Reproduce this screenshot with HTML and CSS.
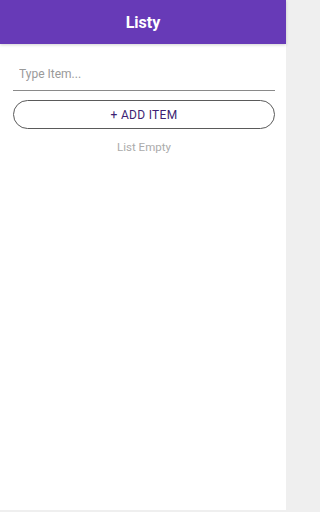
FILE: index.html
```html
<!DOCTYPE html>
<html>
<head>
<meta charset="utf-8">
<link rel="stylesheet" href="styles.css">
</head>
<body>
<div class="screen">
  <header class="appbar"><h1 class="title">Listy</h1></header>
  <main class="content">
    <input class="item-input" type="text" placeholder="Type Item...">
    <button class="add-btn">+ ADD ITEM</button>
    <p class="empty">List Empty</p>
  </main>
</div>
</body>
</html>
```
FILE: styles.css
```css
html, body {
  margin: 0;
  padding: 0;
  background: #efefef;
  font-family: Roboto, "Noto Sans", sans-serif;
}
.screen {
  width: 286px;
  height: 510px;
  background: #fff;
  display: flex;
  flex-direction: column;
}
.appbar {
  height: 44px;
  background: #673ab7;
  display: flex;
  align-items: center;
  justify-content: center;
  box-shadow: 0 1px 3px rgba(0,0,0,0.18);
}
.title {
  margin: 0;
  color: #fff;
  font-size: 16px;
  font-weight: 700;
}
.content {
  display: flex;
  flex-direction: column;
  padding: 13px 11px 0 13px;
}
.item-input {
  height: 34px;
  border: none;
  border-bottom: 1px solid #8a8a8a;
  padding: 0 6px;
  font-family: inherit;
  font-size: 12px;
  color: #333;
  outline: none;
  background: transparent;
  box-sizing: border-box;
}
.item-input::placeholder {
  color: #9a9a9a;
}
.add-btn {
  margin-top: 9px;
  height: 29px;
  border: 1px solid #5a5a5a;
  border-radius: 15px;
  background: #fff;
  color: #3d1f73;
  font-family: inherit;
  font-size: 12px;
  font-weight: 400;
  letter-spacing: 0.3px;
  padding: 0;
}
.empty {
  margin: 10px 0 0;
  line-height: 16px;
  text-align: center;
  color: #ababab;
  font-size: 11.5px;
}
```
